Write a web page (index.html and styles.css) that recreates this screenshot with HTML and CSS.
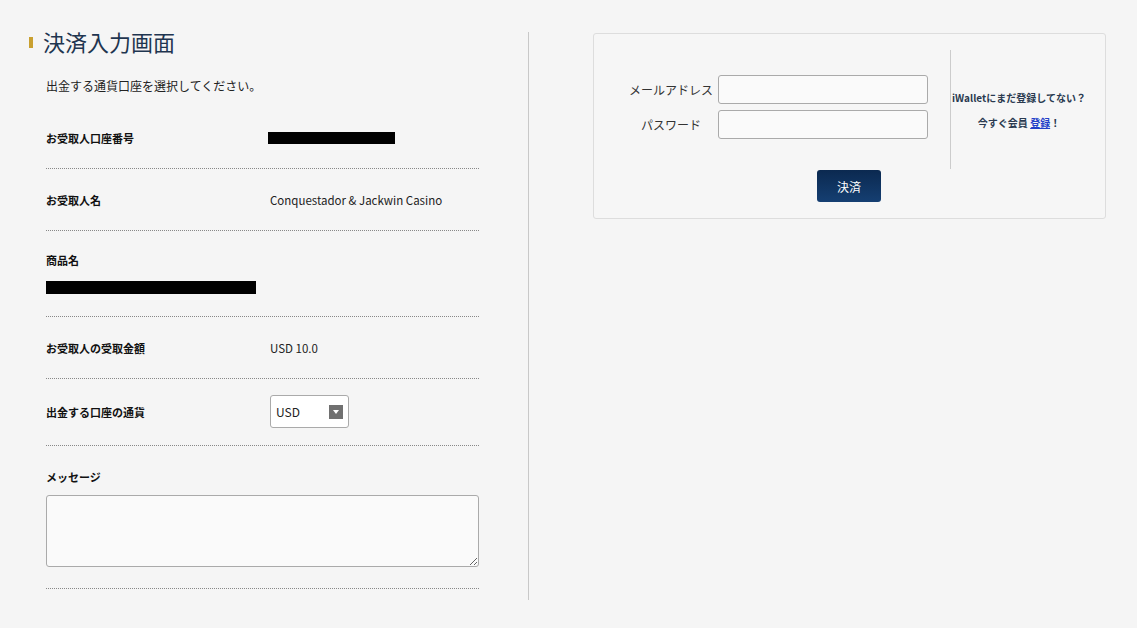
FILE: index.html
```html
<!DOCTYPE html>
<html lang="ja">
<head>
  <meta charset="UTF-8">
  <title>決済入力画面</title>
  <link rel="stylesheet" href="styles.css">
</head>
<body>

  <div class="page">
    <div class="left">
      <h1 class="headline">決済入力画面</h1>
      <p class="lead">出金する通貨口座を選択してください。</p>

      <div class="rows">
        <div class="row">
          <div class="label">お受取人口座番号</div>
          <div class="value"><span class="redact redact-short"></span></div>
        </div>
        <div class="row">
          <div class="label">お受取人名</div>
          <div class="value">Conquestador &amp; Jackwin Casino</div>
        </div>
        <div class="row row-stack">
          <div class="label">商品名</div>
          <div class="value"><span class="redact redact-long"></span></div>
        </div>
        <div class="row">
          <div class="label">お受取人の受取金額</div>
          <div class="value">USD 10.0</div>
        </div>
        <div class="row row-select">
          <div class="label">出金する口座の通貨</div>
          <div class="value">
            <div class="select">
              <span>USD</span>
              <span class="arrow"></span>
            </div>
          </div>
        </div>
        <div class="row row-stack row-message">
          <div class="label">メッセージ</div>
          <textarea class="message"></textarea>
        </div>
      </div>
    </div>

    <div class="right">
      <div class="panel">
        <div class="login">
          <div class="field">
            <label>メールアドレス</label>
            <input type="text">
          </div>
          <div class="field">
            <label>パスワード</label>
            <input type="password">
          </div>
          <button class="pay">決済</button>
        </div>
        <div class="signup">
          <p class="signup-q">iWalletにまだ登録してない？</p>
          <p class="signup-a">今すぐ会員 <a href="#">登録</a>！</p>
        </div>
      </div>
    </div>
  </div>

</body>
</html>
```

FILE: styles.css
```css
body {
  margin: 0;
  background: #f5f5f5;
  color: #222;
  font-family: "Noto Sans CJK JP", "Noto Sans", sans-serif;
}

.page {
  display: flex;
  padding-top: 32px;
}

.left {
  width: 499px;
  padding-left: 29px;
  border-right: 1px solid #c8c8c8;
  height: 568px;
}

.headline {
  margin: 0;
  padding-left: 14px;
  position: relative;
  font-size: 22px;
  font-weight: normal;
  line-height: 18px;
  color: #1f3550;
}
.headline::before {
  content: "";
  position: absolute;
  left: 0;
  top: 5px;
  width: 4px;
  height: 11px;
  background: #c9a030;
}

.lead {
  margin: 27px 0 0 17px;
  font-size: 12px;
  line-height: 18px;
  color: #222;
}

.rows {
  margin: 12px 0 0 17px;
  width: 433px;
}

.row {
  display: flex;
  align-items: center;
  padding: 21px 0 20px;
  min-height: 20px;
  border-bottom: 1px dotted #888;
}

.label {
  width: 224px;
  flex-shrink: 0;
  font-size: 11px;
  font-weight: bold;
  color: #111;
}

.value {
  font-size: 11.5px;
  color: #222;
}

.redact {
  display: block;
  background: #000;
}
.redact-short {
  width: 127px;
  height: 12px;
  margin-left: -2px;
}
.redact-long {
  width: 210px;
  height: 13px;
  margin-top: 13px;
}

.row-stack {
  flex-direction: column;
  align-items: flex-start;
  padding: 21px 0 22px;
}

.row-select {
  padding: 16px 0 17px;
}

.select {
  display: flex;
  align-items: center;
  justify-content: space-between;
  width: 67px;
  height: 31px;
  padding: 0 5px;
  background: #fff;
  border: 1px solid #aaa;
  border-radius: 3px;
  font-size: 12px;
}
.select .arrow {
  width: 14px;
  height: 14px;
  background: #707070;
  position: relative;
}
.select .arrow::after {
  content: "";
  position: absolute;
  left: 4px;
  top: 5px;
  border-left: 3px solid transparent;
  border-right: 3px solid transparent;
  border-top: 4px solid #fff;
}

.message {
  box-sizing: border-box;
  width: 433px;
  height: 72px;
  margin-top: 10px;
  background: #fafafa;
  border: 1px solid #aaa;
  border-radius: 3px;
}

.row-message {
  padding-top: 23px;
  padding-bottom: 21px;
}

.right {
  padding-left: 64px;
}

.panel {
  display: flex;
  align-items: flex-start;
  width: 511px;
  height: 184px;
  margin-top: 1px;
  border: 1px solid #ddd;
  border-radius: 3px;
  background: #f6f6f6;
}

.login {
  width: 356px;
  padding-top: 41px;
}

.field {
  display: flex;
  align-items: center;
  margin-bottom: 6px;
}
.field label {
  width: 86px;
  margin-left: 34px;
  margin-right: 4px;
  text-align: center;
  white-space: nowrap;
  font-size: 12px;
  color: #333;
}
.field input {
  box-sizing: border-box;
  width: 210px;
  height: 29px;
  background: #fafafa;
  border: 1px solid #aaa;
  border-radius: 3px;
}

.pay {
  display: block;
  margin: 31px 0 0 223px;
  width: 64px;
  height: 32px;
  border: none;
  border-radius: 3px;
  background: linear-gradient(#0b2950, #153f72);
  color: #fff;
  font-family: inherit;
  font-size: 12px;
  cursor: pointer;
}

.signup {
  margin-top: 16px;
  height: 119px;
  width: 136px;
  padding-right: 18px;
  border-left: 1px solid #ccc;
  display: flex;
  flex-direction: column;
  justify-content: center;
  align-items: center;
  font-size: 10px;
  font-weight: bold;
  color: #2a3a50;
}
.signup p {
  margin: 0;
}
.signup-a {
  margin-top: 10px !important;
}
.signup a {
  color: #2340c8;
}
```
